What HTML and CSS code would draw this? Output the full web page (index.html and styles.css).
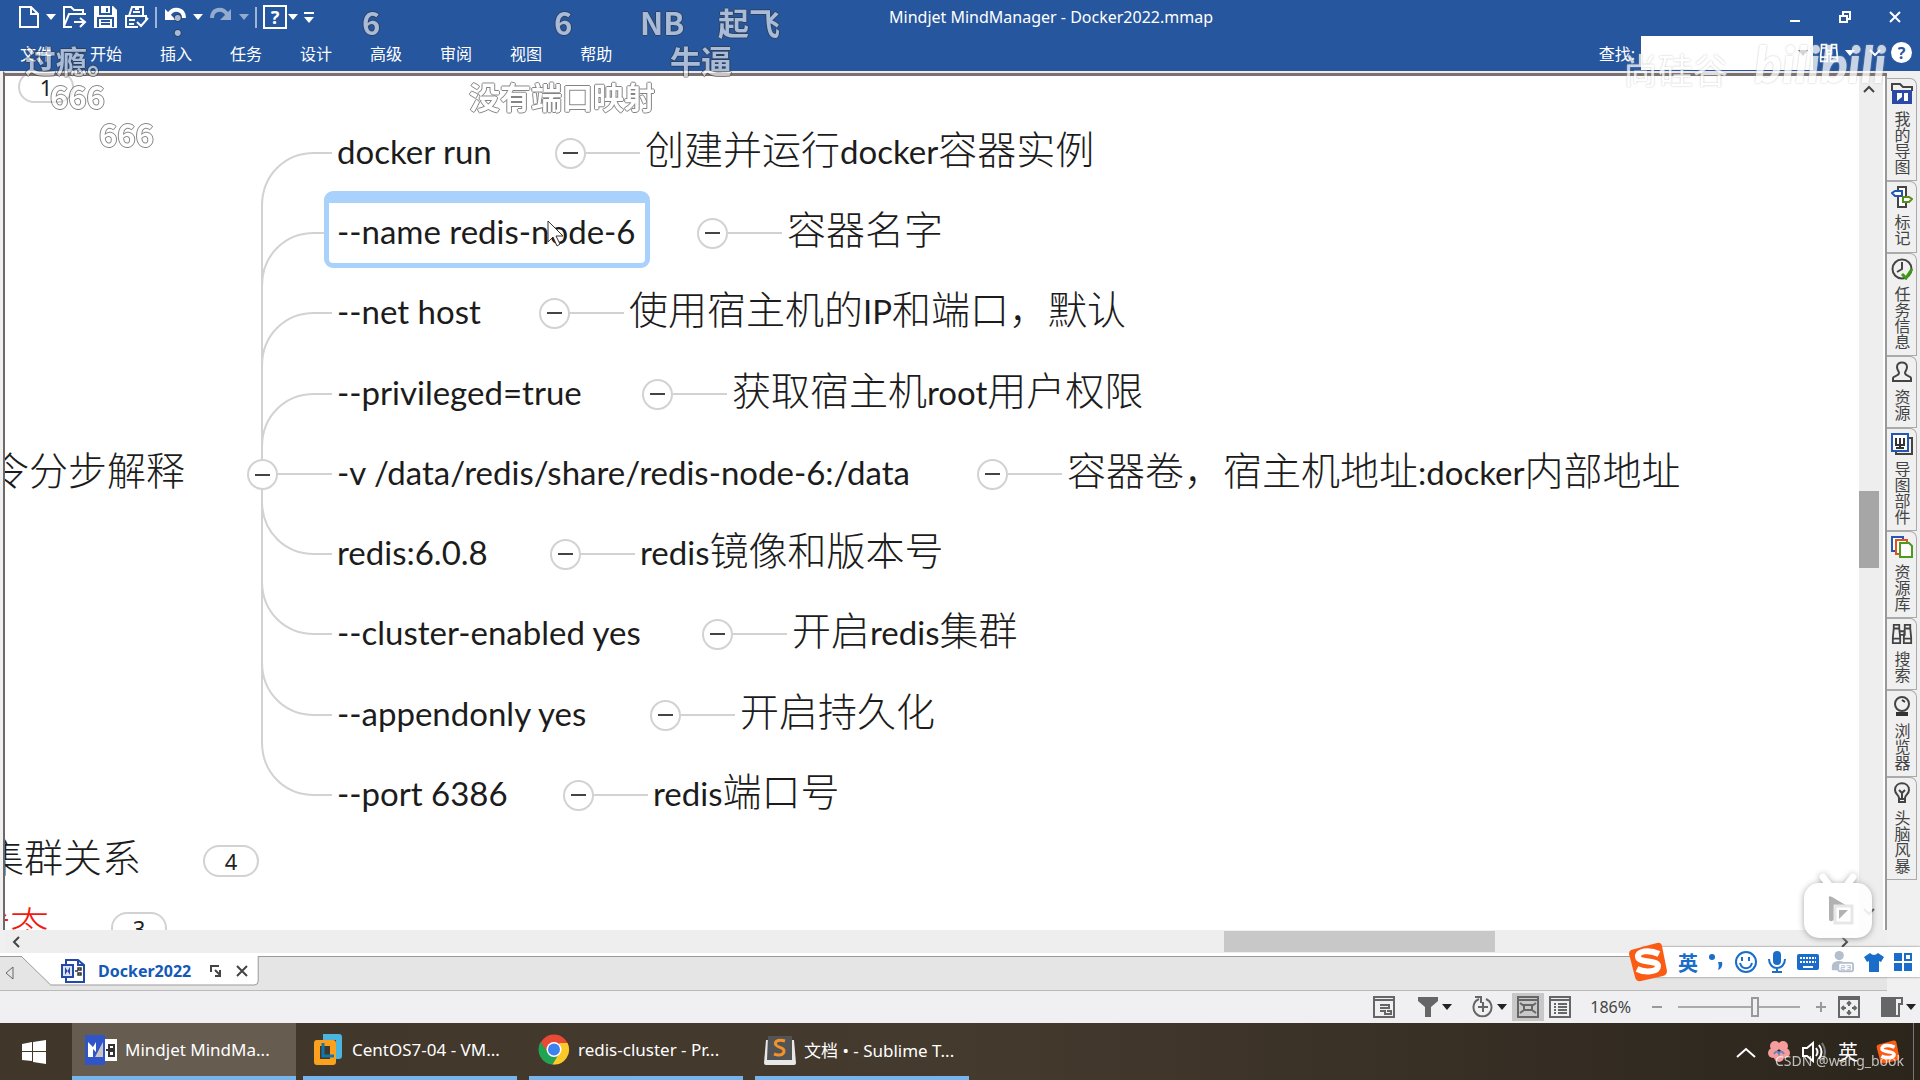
FILE: index.html
```html
<!DOCTYPE html>
<html lang="zh-CN">
<head>
  <meta charset="UTF-8" />
  <meta name="viewport" content="width=device-width, initial-scale=1.0"/>
  <title>Mindjet MindManager - Docker2022.mmap</title>
  <link rel="stylesheet" href="styles.css">
</head>
<body>
  <svg class="defs" aria-hidden="true">
    <symbol id="sogou" viewBox="0 0 40 40">
      <path d="M3 8 L29 1 Q33 0 34 4 L39 29 Q39 33 35 34 L13 39 Q8 40 7 35 L1 12 Q1 9 3 8Z" fill="#fb5c14"/>
      <path d="M31 12 C21 7 9 9 10 15 C11 21 30 18 30 24 C30 30 17 31 9 27" fill="none" stroke="#fff" stroke-width="6"/>
    </symbol>
    <symbol id="binoculars" viewBox="0 0 24 24">
      <path d="M3 2h6v4H3zM15 2h6v4h-6zM3 6l-1 10v6h8v-6L9 6M15 6l-1 10v6h8v-6L21 6M9 9h6v4H9M2 17h8M14 17h8" fill="none" stroke="currentColor" stroke-width="2"/>
    </symbol>
  </svg>

  <header class="app-header">
    <div class="title-row">
      <div class="quick-tools">
        <button aria-label="新建"><svg width="22" height="24" viewBox="0 0 22 24"><path d="M2 2h11l7 7v13H2zM13 2v7h7"/></svg></button>
        <span class="caret"></span>
        <button aria-label="打开"><svg width="25" height="24" viewBox="0 0 25 24"><path d="M10 22H2V2h7l3 3h9v4M2 21L7 9h17M12 17h10M18 13l5 4-5 5"/></svg></button>
        <button aria-label="保存"><svg width="25" height="24" viewBox="0 0 25 24"><path d="M1 1h19l4 4v18H1z" fill="#fff" stroke="none"/><path d="M7 1v8h11V1M14 3v4M5 22v-9h15v9M8 16h9M8 19h9" stroke="#26569e"/></svg></button>
        <button aria-label="打印"><svg width="25" height="24" viewBox="0 0 25 24"><path d="M5 11L8 2h11v9M9 7h7M11 4h4M14 22H2V11h20v4M5 15h6M5 19h5M13 17l4 4 7-8"/></svg></button>
        <span class="divider"></span>
        <button aria-label="撤消"><svg width="24" height="24" viewBox="0 0 24 24"><path d="M2 4v11h11z" fill="#fff" stroke="none"/><path d="M6 9C11 2 21 4 21 13" stroke-width="4"/></svg></button>
        <span class="caret"></span>
        <button class="redo" aria-label="恢复"><svg width="24" height="24" viewBox="0 0 24 24"><path d="M22 4v11H11z" fill="#fff" stroke="none"/><path d="M18 9C13 2 3 4 3 13" stroke-width="4"/></svg></button>
        <span class="caret dim"></span>
        <span class="divider"></span>
        <button class="ask" aria-label="帮助主题">?</button>
        <span class="caret tight"></span>
        <span class="overflow"><span class="caret"></span></span>
      </div>
      <h1>Mindjet MindManager - Docker2022.mmap</h1>
      <div class="window-buttons">
        <button aria-label="最小化"><svg width="14" height="14" viewBox="0 0 14 14"><path d="M2 11h10" stroke-width="3"/></svg></button>
        <button aria-label="还原"><svg width="14" height="14" viewBox="0 0 14 14"><path d="M2 6h7v6H2zM5 5V2h7v7H9" /></svg></button>
        <button aria-label="关闭"><svg width="14" height="14" viewBox="0 0 14 14"><path d="M2 2l10 10M12 2L2 12"/></svg></button>
      </div>
    </div>
    <div class="menu-row">
      <nav>
        <button>文件</button><button>开始</button><button>插入</button><button>任务</button><button>设计</button><button>高级</button><button>审阅</button><button>视图</button><button>帮助</button>
      </nav>
      <div class="search">
        <label for="find">查找:</label>
        <div class="find-box"><input id="find" type="text"><span class="caret"></span></div>
        <button aria-label="搜索"><svg width="20" height="22"><use href="#binoculars"/></svg></button>
        <span class="caret"></span>
        <svg class="chevron" width="12" height="8" viewBox="0 0 12 8"><path d="M1 1l5 5 5-5"/></svg>
        <button class="help" aria-label="帮助">?</button>
      </div>
    </div>
  </header>

  <main class="workspace">
    <section class="document">
      <div class="view">
        <div class="canvas">
          <svg class="links" width="1200" height="860">
            <g transform="translate(-5 -76)">
              <path d="M262 202V745"/>
              <path d="M332 153H314C286 153 262 174 262 206"/>
              <path d="M332 233H314C286 233 262 254 262 286"/>
              <path d="M332 313H314C286 313 262 334 262 366"/>
              <path d="M332 394H314C286 394 262 415 262 447"/>
              <path d="M262 474H332"/>
              <path d="M332 554H314C286 554 262 533 262 501"/>
              <path d="M332 634H314C286 634 262 613 262 581"/>
              <path d="M332 715H314C286 715 262 694 262 662"/>
              <path d="M332 795H314C286 795 262 774 262 742"/>
            </g>
          </svg>

          <div class="topic root"><b>令分步解释</b></div>
          <button class="toggle root-toggle" aria-label="折叠"></button>

          <div class="topic r1">docker run</div>
          <div class="topic r2 selected">--name redis-node-6</div>
          <div class="topic r3">--net host</div>
          <div class="topic r4">--privileged=true</div>
          <div class="topic r5">-v /data/redis/share/redis-node-6:/data</div>
          <div class="topic r6">redis:6.0.8</div>
          <div class="topic r7">--cluster-enabled yes</div>
          <div class="topic r8">--appendonly yes</div>
          <div class="topic r9">--port 6386</div>

          <div class="note r1"><button class="toggle" aria-label="折叠"></button><i></i><p><b>创建并运行</b>docker<b>容器实例</b></p></div>
          <div class="note r2"><button class="toggle" aria-label="折叠"></button><i></i><p><b>容器名字</b></p></div>
          <div class="note r3"><button class="toggle" aria-label="折叠"></button><i></i><p><b>使用宿主机的</b>IP<b>和端口，默认</b></p></div>
          <div class="note r4"><button class="toggle" aria-label="折叠"></button><i></i><p><b>获取宿主机</b>root<b>用户权限</b></p></div>
          <div class="note r5"><button class="toggle" aria-label="折叠"></button><i></i><p><b>容器卷，宿主机地址</b>:docker<b>内部地址</b></p></div>
          <div class="note r6"><button class="toggle" aria-label="折叠"></button><i></i><p>redis<b>镜像和版本号</b></p></div>
          <div class="note r7"><button class="toggle" aria-label="折叠"></button><i></i><p><b>开启</b>redis<b>集群</b></p></div>
          <div class="note r8"><button class="toggle" aria-label="折叠"></button><i></i><p><b>开启持久化</b></p></div>
          <div class="note r9"><button class="toggle" aria-label="折叠"></button><i></i><p>redis<b>端口号</b></p></div>

          <div class="topic cluster"><b>集群关系</b></div>
          <div class="topic state"><b>状态</b></div>
          <button class="count c1">1</button>
          <button class="count c4">4</button>
          <button class="count c3">3</button>

          <svg class="pointer" width="18" height="28" viewBox="0 0 18 28"><path d="M1 1v21l5-5 4 9 3-2-4-8h7z" fill="#fff" stroke="#333" stroke-width="1"/></svg>
        </div>
        <div class="scroll-y">
          <svg width="12" height="8" viewBox="0 0 12 8"><path d="M1 7l5-5 5 5"/></svg>
          <span class="thumb"></span>
          <svg width="12" height="8" viewBox="0 0 12 8"><path d="M1 1l5 5 5-5"/></svg>
        </div>
      </div>
      <div class="scroll-x">
        <svg width="8" height="12" viewBox="0 0 8 12"><path d="M7 1L2 6l5 5"/></svg>
        <span class="thumb"></span>
        <svg width="8" height="12" viewBox="0 0 8 12"><path d="M1 1l5 5-5 5"/></svg>
      </div>
      <div class="doc-tabs">
        <svg class="prev" width="9" height="14" viewBox="0 0 9 14"><path d="M8 1v12L1 7z"/></svg>
        <div class="doc-tab">
          <svg class="tab-shape" viewBox="0 0 240 30" preserveAspectRatio="none"><path d="M0 0L30 29H235Q239 29 239 25V0" fill="#fff" stroke="#999"/></svg>
          <svg class="doc-icon" width="24" height="24" viewBox="0 0 24 24"><path d="M5 6V1h12l6 5v17H5v-4M17 1v5h6" fill="#fff" stroke="#234aa8" stroke-width="2"/><path d="M1 6h11v12H1z" fill="#dfe5f2" stroke="#234aa8" stroke-width="2"/><path d="M4 8v8l5-8v8z" fill="#234aa8"/><path d="M14 12h3M17 9h3v2h-3zM17 14h3v2h-3z" fill="none" stroke="#333" stroke-width="1.5"/></svg>
          <a href="#">Docker2022</a>
          <svg class="pop" width="12" height="12" viewBox="0 0 12 12"><path d="M1 7V1h8M5 5l5 5M10 5v6H5" /></svg>
          <button aria-label="关闭"><svg width="14" height="14" viewBox="0 0 14 14"><path d="M2 2l10 10M12 2L2 12"/></svg></button>
        </div>
      </div>
    </section>

    <aside class="side-tabs">
      <button class="tall"><svg width="22" height="22" viewBox="0 0 22 22"><path d="M1 8V1h8l3 3h9v4" fill="none" stroke="#444" stroke-width="2"/><path d="M1 7h20v14H1z" fill="#2b4aa8"/><path d="M6 10v8l5-4V10zM13 10h4v8h-4z" fill="#fff"/></svg>我的导图</button>
      <button><svg width="22" height="22" viewBox="0 0 22 22"><path d="M7 1h8v20H7z" fill="#fff" stroke="#444" stroke-width="2"/><path d="M1 7l3-2h7v5H4z" fill="#fff" stroke="#1f56b0" stroke-width="2"/><path d="M12 11h6l3 2-3 3h-6z" fill="#fff" stroke="#549018" stroke-width="2"/></svg>标记</button>
      <button class="tall"><svg width="22" height="22" viewBox="0 0 22 22"><circle cx="11" cy="11" r="9.500" fill="none" stroke="#444" stroke-width="2"/><path d="M11 4v7l-5 3" fill="none" stroke="#444" stroke-width="2"/><path d="M11 16l4 4 6-9" fill="none" stroke="#3c9b12" stroke-width="3"/></svg>任务信息</button>
      <button><svg width="22" height="22" viewBox="0 0 22 22"><path d="M2 20v-3c0-2 6-2 6-5 0-2-2-3-2-6 0-6 10-6 10 0 0 3-2 4-2 6 0 3 6 3 6 5v3z" fill="none" stroke="#444" stroke-width="2"/></svg>资源</button>
      <button class="tall"><svg width="22" height="22" viewBox="0 0 22 22"><path d="M5 18v3h16V5h-3" fill="none" stroke="#444" stroke-width="2"/><path d="M1 1h16v17H1z" fill="#fff" stroke="#2358b5" stroke-width="2"/><path d="M5 5v7h8V5M9 5v10M5 15h8" fill="none" stroke="#333" stroke-width="2"/></svg>导图部件</button>
      <button class="mid"><svg width="22" height="22" viewBox="0 0 22 22"><path d="M1 1h11v14H1z" fill="#fff" stroke="#2358b5" stroke-width="2"/><path d="M5 4h11v14H5z" fill="#fff" stroke="#e3501c" stroke-width="2"/><path d="M9 7h9l3 3v11H9z" fill="#fff" stroke="#4d9a20" stroke-width="2"/></svg>资源库</button>
      <button><svg width="22" height="22"><use href="#binoculars"/></svg>搜索</button>
      <button class="mid"><svg width="22" height="22" viewBox="0 0 22 22"><circle cx="11" cy="9" r="7" fill="none" stroke="#444" stroke-width="2"/><path d="M11 5l3 2M6 18h10v2H6z" fill="none" stroke="#333" stroke-width="2"/></svg>浏览器</button>
      <button class="tall"><svg width="22" height="22" viewBox="0 0 22 22"><path d="M8 16c0-3-4-4-4-8 0-9 14-9 14 0 0 4-4 5-4 8v4H8zM8 17h6M11 16v-5L8 8M11 11l3-3" fill="none" stroke="#444" stroke-width="2"/></svg>头脑风暴</button>
    </aside>
  </main>

  <footer class="status-bar">
    <button aria-label="备注"><svg width="22" height="22" viewBox="0 0 22 22"><path d="M1 1h20v20H1zM1 4h20M7 9h9v3H7M7 15h5v3h6v-3h-4"/></svg></button>
    <button class="filter" aria-label="筛选"><svg width="22" height="22" viewBox="0 0 22 22"><path d="M1 1h20v4l-7 6v10H8V11L1 5z" fill="#666"/></svg><span class="caret"></span></button>
    <button class="zoom-to" aria-label="定位"><svg width="22" height="22" viewBox="0 0 22 22"><path d="M7 3A9 9 0 1 0 14 3M11 6v10M6 11h10M3 1h6v6"/></svg><span class="caret"></span></button>
    <button class="active" aria-label="导图视图"><svg width="22" height="22" viewBox="0 0 22 22"><path d="M1 1h20v20H1zM1 4h20M7 9h8v5H7zM3 7l4 3M19 7l-4 3M3 17l4-3M19 17l-4-3"/></svg></button>
    <button aria-label="大纲视图"><svg width="22" height="22" viewBox="0 0 22 22"><path d="M1 1h20v20H1zM1 4h20M5 8h2M9 8h9M5 11h2M9 11h9M5 14h2M9 14h9M5 17h2M9 17h9"/></svg></button>
    <label for="zoom">186%</label>
    <svg class="step" width="12" height="12" viewBox="0 0 12 12"><path d="M1 6h10"/></svg>
    <input id="zoom" type="range" min="0" max="100" value="64">
    <svg class="step" width="12" height="12" viewBox="0 0 12 12"><path d="M1 6h10M6 1v10"/></svg>
    <button class="fit" aria-label="适合窗口"><svg width="22" height="22" viewBox="0 0 22 22"><path d="M1 1h20v20H1zM1 3h20M11 6v4M9 8l2-2 2 2M11 14v4M9 16l2 2 2-2M4 12h4M6 10l-2 2 2 2M14 12h4M16 10l2 2-2 2"/></svg></button>
    <button class="panel" aria-label="面板"><svg width="22" height="22" viewBox="0 0 22 22"><path d="M1 2h13v18H1z" fill="#666"/><path d="M14 2h7v6h-3v12h-4"/></svg><span class="caret"></span></button>
  </footer>

  <footer class="taskbar">
    <button class="start" aria-label="开始"><svg width="24" height="24" viewBox="0 0 24 24"><path d="M0 4l10-2v9H0zM11 2l13-2v11H11zM0 12h10v9L0 20zM11 12h13v12l-13-2z" fill="#fff"/></svg></button>
    <button class="task current"><svg width="32" height="30" viewBox="0 0 32 30"><path d="M0 0h20v30H0z" fill="#2f55c8"/><path d="M20 4h12v22H20z" fill="#fff"/><path d="M3 7v15h5V14l3 3V7L8 12z" fill="#fff"/><path d="M10 22l8-15v15z" fill="#c9c5c0"/><path d="M21 15h3M24 10h5v4h-5zM24 16h5v5h-5z" fill="none" stroke="#333" stroke-width="2"/></svg>Mindjet MindMa...</button>
    <button class="task"><svg width="28" height="32" viewBox="0 0 28 32"><path d="M9 3h16v19h-5" fill="none" stroke="#4bb5df" stroke-width="6" stroke-linejoin="round"/><path d="M3 9h16v19H3z" fill="none" stroke="#fba11d" stroke-width="6" stroke-linejoin="round"/><path d="M9 9v13h11" fill="none" stroke="#0e78ae" stroke-width="3"/></svg>CentOS7-04 - VM...</button>
    <button class="task"><svg width="31" height="31" viewBox="0 0 31 31"><circle cx="15.500" cy="15.500" r="15" fill="#e94a35"/><path d="M2 8A15 15 0 0 0 14 30.500L21 19H10z" fill="#20a352"/><path d="M29 9A15 15 0 0 1 14 30.500L21 19V9z" fill="#fbc928"/><circle cx="15.500" cy="15.500" r="7.500" fill="#fff"/><circle cx="15.500" cy="15.500" r="6" fill="#3b82f0"/></svg>redis-cluster - Pr...</button>
    <button class="task"><svg width="32" height="30" viewBox="0 0 32 30"><path d="M2 5h28l2 23q0 2-2 2H2q-2 0-2-2z" fill="#e8e8e6"/><path d="M4 1h24v24H3z" fill="#515354"/><path d="M21 6C13 4 10 7 12 10s8 2 8 6-5 5-10 3" fill="none" stroke="#f5912a" stroke-width="3"/></svg>文档 • - Sublime T...</button>
    <div class="tray">
      <svg width="20" height="12" viewBox="0 0 20 12"><path d="M1 11l9-8 9 8" fill="none" stroke="#fff" stroke-width="2"/></svg>
      <svg width="22" height="22" viewBox="0 0 22 22"><g fill="#f59c9c"><circle cx="7" cy="5" r="5"/><circle cx="15" cy="5" r="5"/><circle cx="17" cy="12" r="5"/><circle cx="11" cy="16" r="5"/><circle cx="5" cy="12" r="5"/></g><path d="M6 13q3-5 5 0 2-5 5 0" fill="none" stroke="#6888bc" stroke-width="2"/></svg>
      <svg width="24" height="22" viewBox="0 0 24 22"><path d="M1 7h4l6-5v18l-6-5H1zM14 7q3 4 0 8M17 4q5 7 0 14" fill="none" stroke="#fff" stroke-width="2"/><path d="M20 2q6 9 0 18" fill="none" stroke="#777" stroke-width="2"/></svg>
      <span>英</span>
      <svg class="sogou-small" width="24" height="24"><use href="#sogou"/></svg>
    </div>
  </footer>

  <!-- input method bar floating above the window -->
  <div class="ime">
    <svg class="ime-logo" width="40" height="40"><use href="#sogou"/></svg>
    <strong>英</strong>
    <svg width="16" height="22" viewBox="0 0 16 22"><circle cx="4" cy="6" r="3"/><path d="M10 11h4c1 4-1 7-4 8 1-3 1-5 0-8z"/></svg>
    <svg width="24" height="24" viewBox="0 0 24 24"><circle cx="12" cy="12" r="10" fill="none" stroke="#1a6dc8" stroke-width="2"/><path d="M8 7v4M15 7v4M6 13c2 7 10 7 12 0" fill="none" stroke="#1a6dc8" stroke-width="2"/></svg>
    <svg width="18" height="24" viewBox="0 0 18 24"><rect x="5" y="1" width="8" height="14" rx="4"/><path d="M1 9c0 12 16 12 16 0M9 18v4M4 22h10" fill="none" stroke="#1a6dc8" stroke-width="2"/></svg>
    <svg width="24" height="20" viewBox="0 0 24 20"><rect x="1" y="2" width="22" height="16" rx="2"/><path d="M4 6h16M4 10h16" stroke="#fff" stroke-width="2" stroke-dasharray="2 1"/><path d="M7 15h10" stroke="#fff" stroke-width="2"/></svg>
    <svg width="24" height="24" viewBox="0 0 26 24"><g fill="#b4bfce"><circle cx="10" cy="5" r="5"/><path d="M2 21v-5q1-5 8-5 5 0 7 4v6z"/></g><rect x="9" y="13" width="16" height="9" rx="2" fill="#fff" stroke="#b4bfce" stroke-width="2"/><path d="M12 16h4v2h-4v2h4M18 16h4v4h-4M19 18h3" fill="none" stroke="#b4bfce"/></svg>
    <svg width="20" height="20" viewBox="0 0 20 20"><path d="M6 1q4 4 8 0l6 4-3 5-2-1v11H5V9l-2 1-3-5z"/></svg>
    <svg width="18" height="18" viewBox="0 0 18 18"><path d="M0 0h8v8H0zM0 10h8v8H0zM10 10h8v8h-8z"/><path d="M11 1h6v6h-6z" fill="#fff" stroke="#1a6dc8" stroke-width="2"/></svg>
  </div>

  <!-- video overlay: comments, player button, watermarks -->
  <div class="danmaku">
    <span class="d1">6</span>
    <span class="d2">6</span>
    <span class="d3">NB</span>
    <span class="d4">起飞</span>
    <span class="d5">牛逼</span>
    <span class="d6">过瘾。</span>
    <span class="d7">：</span>
    <span class="d8">666</span>
    <span class="d9">666</span>
    <span class="d10">没有端口映射</span>
  </div>
  <button class="player" aria-label="播放">
    <svg width="84" height="80" viewBox="0 0 84 80"><path d="M27 11l6 8M57 11l-6 8" stroke="#fff" stroke-width="7" stroke-linecap="round"/><rect x="8" y="17" width="68" height="55" rx="15" fill="#fff"/><path d="M33 33q-1-4 3-2l17 10q4 2 0 5L36 55q-3 1-3-3z" fill="#a9a9a9"/><path d="M39 40h17v17H39z" fill="#fff" stroke="#e5e5e5" stroke-width="3"/><path d="M43 44h9l-9 9z" fill="#aaa"/></svg>
  </button>
  <div class="uploader">尚硅谷</div>
  <div class="site">bilibili</div>
  <div class="credit">CSDN @wang_book</div>
</body>
</html>
```
FILE: styles.css
```css
* {
  box-sizing: border-box;
}
body {
  margin: 0;
  min-height: 100vh;
  display: flex;
  flex-direction: column;
  overflow: hidden;
  position: relative;
  font-family: "Noto Sans", "Noto Sans CJK SC", sans-serif;
  font-size: 16px;
  color: #222;
  background: #fff;
}
button {
  font: inherit;
  color: inherit;
  background: none;
  border: none;
  padding: 0;
  display: flex;
  align-items: center;
}
svg {
  display: block;
  flex: none;
}
.defs {
  position: absolute;
  width: 0;
  height: 0;
}
.caret {
  border: 5px solid transparent;
  border-top: 6px solid currentColor;
  border-bottom: 0;
}

/* header */
.app-header {
  background: #26569e;
  color: #fff;
  height: 71px;
}
.app-header path {
  fill: none;
  stroke: #fff;
  stroke-width: 2;
}
.title-row {
  display: grid;
  grid-template-columns: auto 1fr auto;
  align-items: center;
  height: 34px;
  padding: 0 18px 0 18px;
}
.quick-tools {
  display: flex;
  align-items: center;
  gap: 6px;
}
.app-header .quick-tools path[fill] {
  fill: #fff;
}
.app-header .quick-tools path[stroke="none"] {
  stroke: none;
}
.app-header .quick-tools path[stroke="#26569e"] {
  fill: none;
  stroke: #26569e;
}
.app-header .quick-tools path[stroke-width="4"] {
  stroke-width: 4;
}
.redo, .dim {
  opacity: .5;
}
.divider {
  width: 2px;
  height: 21px;
  background: #9fb4d6;
}
.ask {
  width: 24px;
  height: 24px;
  justify-content: center;
  border: 2px solid #fff;
  font-weight: bold;
  font-size: 18px;
  line-height: 20px;
}
.tight {
  margin-left: -5px;
}
.overflow {
  border-top: 2px solid #fff;
  padding-top: 3px;
}
.overflow .caret {
  display: block;
}
h1 {
  margin: 0;
  font-size: 16px;
  font-weight: normal;
  text-align: center;
}
.window-buttons {
  display: flex;
  gap: 36px;
}
.menu-row {
  display: flex;
  align-items: center;
  justify-content: space-between;
  height: 37px;
}
nav {
  display: flex;
  gap: 38px;
  padding-left: 20px;
}
.search {
  display: flex;
  align-items: center;
  gap: 6px;
  padding-right: 8px;
}
.find-box {
  display: flex;
  align-items: center;
  width: 172px;
  height: 34px;
  padding-right: 5px;
  background: #fff;
  color: #555;
}
.find-box input {
  flex: 1;
  min-width: 0;
  height: 30px;
  border: none;
  outline: none;
  background: none;
  font: inherit;
}
.chevron {
  margin: 0 4px 0 8px;
}
.help {
  width: 21px;
  height: 21px;
  justify-content: center;
  border-radius: 50%;
  background: #fff;
  color: #26569e;
  font-weight: bold;
}

/* workspace */
.workspace {
  flex: 1;
  display: flex;
  min-height: 0;
  background: #f0f0f0;
}
.document {
  flex: 1;
  min-width: 0;
  display: flex;
  flex-direction: column;
}
.view {
  flex: 1;
  display: flex;
  margin-left: 3px;
  border-left: 2px solid #6e6967;
  border-top: 2px solid #eceaea;
  box-shadow: inset 0 3px #7b7270;
  padding-top: 3px;
}
.canvas {
  flex: 1;
  position: relative;
  overflow: hidden;
  background: #fff;
}
.links {
  position: absolute;
  left: 0;
  top: 0;
}
.links path {
  fill: none;
  stroke: #d2d2d2;
  stroke-width: 2;
}
.topic, .note {
  position: absolute;
  height: 40px;
  font-family: Lato, "Noto Sans CJK SC", sans-serif;
  font-size: 33px;
  line-height: 36px;
  white-space: nowrap;
  color: #1c1c1c;
}
.topic {
  left: 332px;
}
.topic b, .note b {
  font-family: "Noto Sans CJK SC", sans-serif;
  font-size: 39px;
  line-height: 36px;
  font-weight: 300;
}
.note {
  display: flex;
  align-items: center;
}
.note i {
  width: 54px;
  height: 2px;
  background: #d2d2d2;
}
.note p {
  margin: 0 0 0 5px;
  height: 48px;
}
.toggle {
  width: 31px;
  height: 31px;
  justify-content: center;
  border: 2px solid #d2d2d2;
  border-radius: 50%;
  background: #fff;
}
.toggle::before {
  content: "";
  width: 15px;
  height: 2px;
  background: #444;
}
.r1 { top: 57px; }
.r2 { top: 137px; }
.r3 { top: 217px; }
.r4 { top: 298px; }
.r5 { top: 378px; }
.r6 { top: 458px; }
.r7 { top: 538px; }
.r8 { top: 619px; }
.r9 { top: 699px; }
.note.r1 { left: 550px; }
.note.r2 { left: 692px; }
.note.r3 { left: 534px; }
.note.r4 { left: 637px; }
.note.r5 { left: 972px; }
.note.r6 { left: 545px; }
.note.r7 { left: 697px; }
.note.r8 { left: 645px; }
.note.r9 { left: 558px; }
.selected {
  left: 319px;
  top: 115px;
  width: 326px;
  height: 77px;
  padding: 10px 8px;
  border: 5px solid #a8d1fb;
  border-top-width: 12px;
  border-radius: 9px;
  background: #fff;
}
.root {
  left: -15px;
  top: 374px;
}
.root-toggle {
  position: absolute;
  left: 242px;
  top: 383px;
}
.cluster {
  left: -20px;
  top: 761px;
}
.state {
  left: -34px;
  top: 829px;
  color: #f11a10;
}
.count {
  position: absolute;
  width: 56px;
  height: 32px;
  justify-content: center;
  border: 2px solid #d2d2d2;
  border-radius: 16px;
  background: #fff;
  font-size: 22px;
}
.c1 {
  left: 13px;
  top: -5px;
}
.c4 {
  left: 198px;
  top: 769px;
}
.c3 {
  left: 106px;
  top: 836px;
}
.pointer {
  position: absolute;
  left: 542px;
  top: 144px;
}

/* scroll bars */
.scroll-y {
  width: 28px;
  padding: 9px 7px 14px 0;
  display: flex;
  flex-direction: column;
  align-items: center;
  justify-content: space-between;
  background: linear-gradient(90deg, #eee 24px, #fff 24px);
  border-right: 2px solid #999;
}
.scroll-y path, .scroll-x path {
  fill: none;
  stroke: #444;
  stroke-width: 2;
}
.scroll-y .thumb {
  width: 21px;
  height: 77px;
  margin-top: 58px;
  background: #a6a6a6;
}
.scroll-x {
  height: 23px;
  margin-left: 5px;
  padding: 0 38px 0 7px;
  display: flex;
  align-items: center;
  background: #eee;
}
.scroll-x .thumb {
  width: 271px;
  height: 21px;
  margin-left: auto;
  margin-right: 346px;
  background: #c8c8c8;
}
.doc-tabs {
  display: flex;
  align-items: center;
  height: 38px;
  padding-left: 5px;
  border-top: 3px solid #fff;
  border-bottom: 1px solid #bbb;
  box-shadow: inset 0 1px #999;
  background: #e5e5e5;
}
.prev {
  fill: none;
  stroke: #666;
}
.doc-tab {
  align-self: flex-start;
  position: relative;
  display: flex;
  align-items: center;
  height: 30px;
  margin-left: 7px;
  padding: 0 10px 0 40px;
}
.doc-tab > * {
  position: relative;
}
.doc-tab .tab-shape {
  position: absolute;
  left: 0;
  top: 0;
  width: 100%;
  height: 100%;
}
.doc-tab a {
  margin: 0 19px 0 13px;
  color: #1259b8;
  font-size: 16px;
  font-weight: bold;
  text-decoration: none;
}
.pop, .doc-tab button svg {
  fill: none;
  stroke: #444;
  stroke-width: 2;
}
.pop {
  margin-right: 13px;
}

/* side tabs */
.side-tabs {
  width: 33px;
  padding-top: 7px;
  display: flex;
  flex-direction: column;
}
.side-tabs button {
  writing-mode: vertical-rl;
  width: 30px;
  height: 72px;
  padding-top: 4px;
  gap: 6px;
  border: 1px solid #aaa;
  border-left: none;
  border-top-right-radius: 7px;
  line-height: 20px;
  color: #444;
}
.side-tabs .tall {
  height: 103px;
}
.side-tabs .mid {
  height: 87px;
}

/* status bar */
.status-bar {
  display: flex;
  align-items: center;
  justify-content: flex-end;
  height: 32px;
  padding-right: 4px;
  background: #f0f0f2;
  color: #444;
}
.status-bar svg {
  fill: none;
  stroke: #666;
  stroke-width: 2;
}
.status-bar .caret {
  margin-left: 3px;
  color: #222;
}
.filter {
  margin-left: 22px;
}
.zoom-to {
  margin: 0 5px 0 20px;
}
.filter svg {
  stroke: none;
}
.active {
  height: 28px;
  padding: 0 5px;
  margin-right: 5px;
  background: #c8c8c8;
}
.status-bar label {
  margin: 0 20px 0 19px;
}
.status-bar .step {
  stroke: #999;
}
.status-bar input {
  appearance: none;
  width: 122px;
  height: 20px;
  margin: 0 15px;
  background: linear-gradient(#aaa, #aaa) center / 100% 2px no-repeat;
}
.status-bar input::-webkit-slider-thumb {
  appearance: none;
  width: 8px;
  height: 20px;
  border: 2px solid #999;
  background: #f0f0f2;
}
.fit {
  margin: 0 21px 0 11px;
}

/* taskbar */
.taskbar {
  display: flex;
  height: 57px;
  color: #fff;
  background: linear-gradient(90deg, #40362a, #453a2e 50%, #2b251c);
}
.start {
  width: 72px;
  justify-content: center;
  padding-right: 5px;
}
.task {
  width: 214px;
  margin-right: 12px;
  padding-left: 9px;
  gap: 8px;
  border-bottom: 4px solid #76b4ec;
  font-size: 17px;
  white-space: nowrap;
}
.task svg {
  width: 32px;
}
.current {
  width: 224px;
  margin-right: 7px;
  padding-left: 13px;
  background: #665c50;
}
.tray {
  display: flex;
  align-items: center;
  gap: 12px;
  margin-left: auto;
  margin-right: 6px;
  padding-right: 13px;
  border-right: 1px solid #777;
  font-size: 20px;
}
.sogou-small {
  margin-left: 6px;
}

.ime {
  position: absolute;
  right: 0;
  bottom: 103px;
  width: 278px;
  height: 30px;
  display: flex;
  align-items: center;
  gap: 10px;
  background: #fff;
  box-shadow: 0 0 2px #666;
  color: #1a6dc8;
  fill: #1a6dc8;
  font-size: 20px;
}
.ime-logo {
  margin-left: -14px;
}

/* video overlay */
.danmaku span {
  position: absolute;
  font-family: "Noto Sans CJK SC", sans-serif;
  font-size: 31px;
  line-height: 36px;
  font-weight: bold;
  color: #fff;
  opacity: .6;
  white-space: nowrap;
  text-shadow: 1px 0 #333, -1px 0 #333, 0 1px #333, 0 -1px #333;
}
.d1 { left: 362px; top: 4px; }
.d2 { left: 554px; top: 4px; }
.d3 { left: 640px; top: 4px; }
.d4 { left: 718px; top: 4px; }
.d5 { left: 670px; top: 42px; }
.d6 { left: 25px; top: 42px; }
.d7 { left: 170px; top: 4px; }
.d8 { left: 50px; top: 78px; }
.d9 { left: 99px; top: 116px; }
.d10 { left: 469px; top: 78px; }
.player {
  position: absolute;
  right: 40px;
  bottom: 134px;
  opacity: .9;
  filter: drop-shadow(0 1px 3px #999);
}
.uploader, .site {
  position: absolute;
  color: #fff;
  opacity: .75;
  white-space: nowrap;
  text-shadow: 0 0 2px #aaa;
}
.uploader {
  right: 192px;
  top: 49px;
  font-size: 35px;
  line-height: 44px;
}
.site {
  right: 34px;
  top: 34px;
  font-family: Lato, sans-serif;
  font-size: 51px;
  line-height: 60px;
  font-style: italic;
  font-weight: 900;
}
.credit {
  position: absolute;
  right: 16px;
  bottom: 8px;
  font-size: 14px;
  line-height: 22px;
  color: #fff;
  opacity: .7;
}
```
